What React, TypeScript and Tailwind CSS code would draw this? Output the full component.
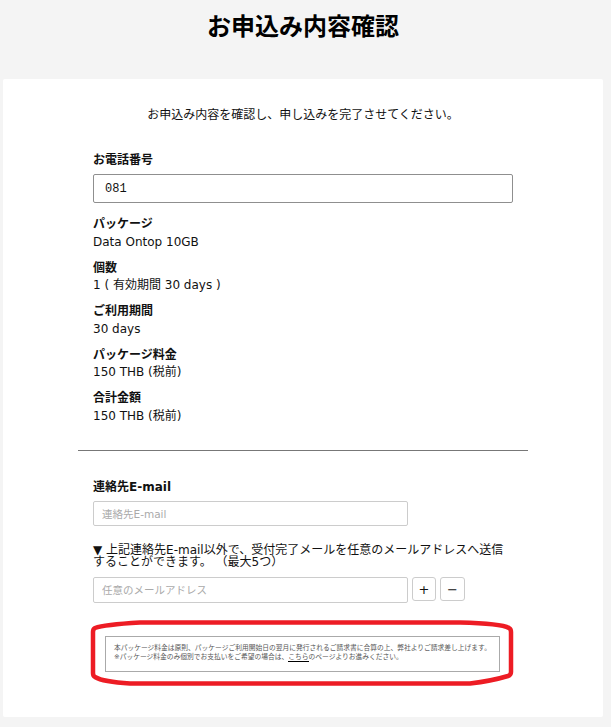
import React from "react";

const sans = "font-['DejaVu_Sans','Noto_Sans_CJK_JP',sans-serif]";

const details = [
  { label: "パッケージ", value: "Data Ontop 10GB" },
  { label: "個数", value: "1 ( 有効期間 30 days )" },
  { label: "ご利用期間", value: "30 days" },
  { label: "パッケージ料金", value: "150 THB (税前)" },
  { label: "合計金額", value: "150 THB (税前)" },
];

export default function App() {
  return (
    <div className={`h-[727px] overflow-hidden bg-[#f4f4f4] px-[3px] text-[12px] text-[#111] ${sans}`}>
      <h1 className="w-[600px] pt-[12px] text-center text-[24px] leading-[30px] font-bold text-black">お申込み内容確認</h1>

      <main className="relative mt-[37px] h-[638px] w-[600px] rounded-[2px] bg-white">
        <p className="pt-[27px] text-center text-[12px] leading-[18px]">お申込み内容を確認し、申し込みを完了させてください。</p>

        <div className="mt-[27px] px-[90px]">
          <label className="block text-[12px] leading-[18px] font-bold">お電話番号</label>
          <div className="mt-[5px] flex h-[29px] w-[420px] items-center rounded-[2px] border border-[#8f8f8f] pl-[11px] font-['Liberation_Mono',monospace] text-[12px]">
            081
          </div>

          <dl className="mt-[12px] flex flex-col gap-[8px]">
            {details.map((d) => (
              <div key={d.label}>
                <dt className="text-[12px] leading-[18px] font-bold">{d.label}</dt>
                <dd className="-mt-[0.5px] text-[12px] leading-[18px]">{d.value}</dd>
              </div>
            ))}
          </dl>
        </div>

        <hr className="mx-[75px] mt-[25.5px] w-[450px] border-t border-[#777]" />

        <div className="px-[90px]">
          <label className="mt-[27px] block text-[12px] leading-[18px] font-bold">連絡先E-mail</label>
          <input
            readOnly
            placeholder="連絡先E-mail"
            className="mt-[5px] block h-[25px] w-[315px] rounded-[2px] border border-[#ccc] px-[8px] text-[10.5px] placeholder:text-[#aaa]"
          />

          <p className="mt-[18px] w-[420px] text-[12px] leading-[12px]">▼ 上記連絡先E-mail以外で、受付完了メールを任意のメールアドレスへ送信することができます。 （最大5つ）</p>

          <div className="mt-[9px] flex items-start">
            <input
              readOnly
              placeholder="任意のメールアドレス"
              className="block h-[26px] w-[315px] rounded-[2px] border border-[#ccc] px-[8px] text-[10.5px] placeholder:text-[#aaa]"
            />
            <button type="button" className="ml-[4px] h-[24px] w-[24px] rounded-[3px] border border-[#ccc] text-[13px] leading-none">+</button>
            <button type="button" className="ml-[4px] h-[24px] w-[25px] rounded-[3px] border border-[#ccc] text-[13px] leading-none">−</button>
          </div>

          <div className="mt-[33px] ml-[12px] h-[36px] w-[395px] border border-[#aaa] px-[8px] pt-[6.5px] text-[6.75px] leading-[9.5px] whitespace-nowrap text-[#555]">
            <p>本パッケージ料金は原則、パッケージご利用開始日の翌月に発行されるご請求書に合算の上、弊社よりご請求差し上げます。</p>
            <p>
              ※パッケージ料金のみ個別でお支払いをご希望の場合は、<span className="border-b border-black">こちら</span>のページよりお進みください。
            </p>
          </div>
        </div>

        {/* hand-drawn red marker around the notice */}
        <svg className="absolute top-[540px] left-[87px]" width="426" height="70" viewBox="87 540 426 70" fill="none">
          <path
            d="M137 543.5 H457 C480 544 501 546 506 549 Q508 550 508 553 V593 Q508 596 505 597 C495 600 480 603 467 604.5 H127 C110 603.5 97 601 92 598 Q90 597 90 594 V553 Q90 550 92 549 C100 546 120 544.5 137 543.5 Z"
            stroke="#ed1c24"
            strokeWidth="4.5"
          />
        </svg>
      </main>
    </div>
  );
}
